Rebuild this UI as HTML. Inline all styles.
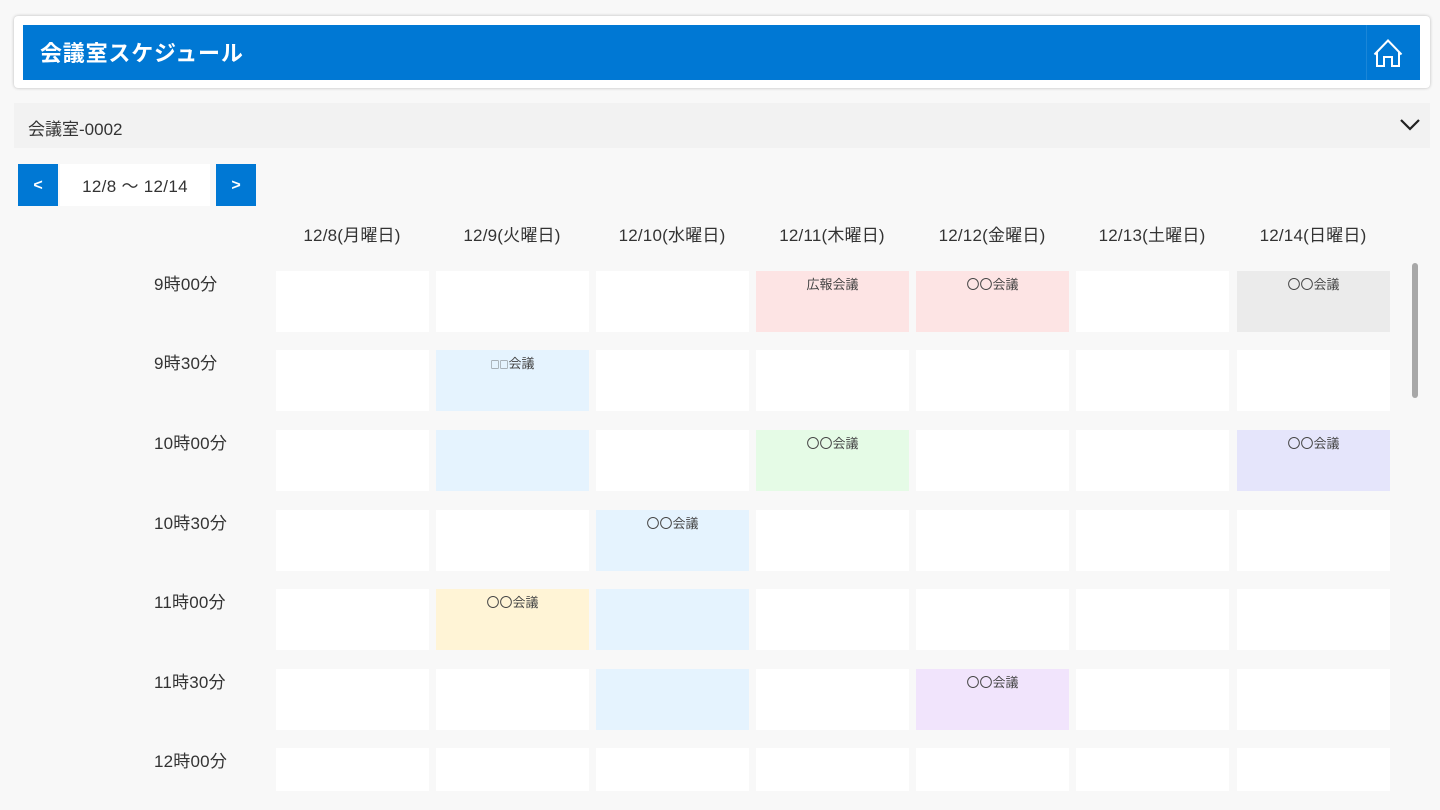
<!DOCTYPE html>
<html><head><meta charset="utf-8"><style>
*{margin:0;padding:0;box-sizing:border-box}
body{width:1440px;height:810px;overflow:hidden;background:#f8f8f8;font-family:"Liberation Sans","Noto Sans CJK JP",sans-serif;color:#333;position:relative}
.a{position:absolute}
.hdr{left:14px;top:16px;width:1416px;height:72px;background:#fff;border-radius:4px;box-shadow:0 0 3px rgba(0,0,0,.25)}
.blue{left:23px;top:25px;width:1397px;height:55px;background:#0078d4}
.title{left:40px;top:36px;color:#fff;font-size:22px;font-weight:bold;letter-spacing:0.8px}
.dd{left:14px;top:103px;width:1416px;height:45px;background:#f2f2f2}
.btn{width:40px;height:42px;top:164px;background:#0078d4;color:#fff;font-weight:bold;font-size:16px;text-align:center;line-height:44px}
.df{left:60px;top:164px;width:150px;height:42px;background:#fff;font-size:17px;letter-spacing:0.3px;text-align:center;line-height:46px;color:#333}
.dh{top:221px;width:152px;text-align:center;font-size:17px;letter-spacing:0.2px;color:#333}
.tl{left:154px;font-size:17px;color:#333;letter-spacing:0.2px}
.c{width:153px;height:61px;background:#fff;font-size:13px;text-align:center;padding-top:3px;color:#444;font-family:"Noto Sans CJK JP",sans-serif;line-height:20px}
.sb{left:1412px;top:263px;width:6px;height:135px;background:#a8a8a8;border-radius:3px}
</style></head><body>
<div class="a hdr"></div>
<div class="a blue"></div>
<div class="a" style="left:1366px;top:25px;width:1px;height:55px;background:#1a86d8"></div>
<div class="a title">会議室スケジュール</div>
<svg class="a" style="left:1368px;top:30px" width="40" height="45" viewBox="1368 30 40 45"><path d="M1374.5 54.5 L1388 40.5 L1401.5 54.5 M1377 52 V66 H1384 V57 H1392 V66 H1399 V52" fill="none" stroke="#fff" stroke-width="2" stroke-linejoin="miter"/></svg>
<div class="a dd"></div>
<div class="a" style="left:28px;top:115px;font-size:17px;color:#333">会議室-0002</div>
<svg class="a" style="left:1398px;top:116px" width="26" height="18"><path d="M3 4 L12 13 L21 4" fill="none" stroke="#222" stroke-width="2.2"/></svg>
<div class="a btn" style="left:18px">&lt;</div>
<div class="a df">12/8 〜 12/14</div>
<div class="a btn" style="left:216px">&gt;</div>

<div class="a dh" style="left:276px">12/8(月曜日)</div>
<div class="a dh" style="left:436px">12/9(火曜日)</div>
<div class="a dh" style="left:596px">12/10(水曜日)</div>
<div class="a dh" style="left:756px">12/11(木曜日)</div>
<div class="a dh" style="left:916px">12/12(金曜日)</div>
<div class="a dh" style="left:1076px">12/13(土曜日)</div>
<div class="a dh" style="left:1237px">12/14(日曜日)</div>

<div class="a tl" style="top:270px">9時00分</div>
<div class="a tl" style="top:349px">9時30分</div>
<div class="a tl" style="top:429px">10時00分</div>
<div class="a tl" style="top:509px">10時30分</div>
<div class="a tl" style="top:588px">11時00分</div>
<div class="a tl" style="top:668px">11時30分</div>
<div class="a tl" style="top:747px">12時00分</div>

<div id="g"></div>
<div class="a sb"></div>
<script>
var xs=[276,436,596,756,916,1076,1237],ys=[271,350,430,510,589,669,748];
var sp={"0,3":["#fde4e4","広報会議"],"0,4":["#fde4e4","〇〇会議"],"0,6":["#ebebeb","〇〇会議"],
"1,1":["#e5f3fe","<span style='font-size:9px'>□□</span>会議"],"2,1":["#e5f3fe",""],"2,3":["#e5fbe6","〇〇会議"],"2,6":["#e5e5fb","〇〇会議"],
"3,2":["#e5f3fe","〇〇会議"],"4,1":["#fff4d6","〇〇会議"],"4,2":["#e5f3fe",""],"5,2":["#e5f3fe",""],"5,4":["#f1e4fc","〇〇会議"]};
var h="";
for(var r=0;r<7;r++)for(var c=0;c<7;c++){var s=sp[r+","+c];var hh=r==6?43:61;
h+='<div class="a c" style="left:'+xs[c]+'px;top:'+ys[r]+'px;height:'+hh+'px'+(s?';background:'+s[0]:'')+'">'+(s?s[1]:'')+'</div>';}
document.getElementById("g").innerHTML=h;
</script>
</body></html>
